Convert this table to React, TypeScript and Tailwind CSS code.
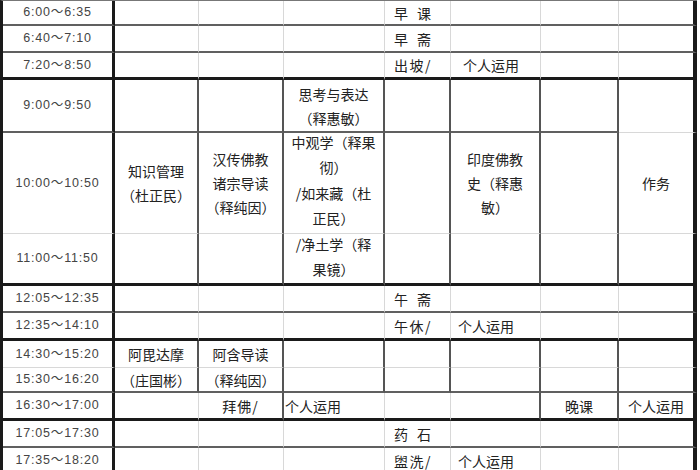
import React from "react";

// border styles per cell edge
const R = {
  thick: "border-r-[3px] border-r-[#1a1a1a]",
  dark: "border-r-2 border-r-[#555555]",
  light: "border-r border-r-[#d8d8d8]",
  edge: "border-r-4 border-r-[#1a1a1a]",
};
const B = {
  thick: "border-b-[3px] border-b-[#1a1a1a]",
  dark: "border-b-2 border-b-[#606060]",
  light: "border-b border-b-[#d8d8d8]",
};

type RK = keyof typeof R;
type BK = keyof typeof B;

type CellDef = { c: React.ReactNode; cls?: string };
type RowDef = {
  time: string;
  b: BK;
  b7?: BK;
  r: RK | RK[];
  cells?: Partial<Record<number, CellDef>>;
};

const CJK = "font-['Noto_Sans_CJK_SC',sans-serif] text-[14px] text-[#222] whitespace-nowrap";
const LEFT4 = "justify-start pl-[9px]";

function T({ children, className = "" }: { children: React.ReactNode; className?: string }) {
  return <span className={`${CJK} leading-[24px] ${className}`}>{children}</span>;
}

function Sp({ a, b }: { a: string; b: string }) {
  return (
    <span className={`${CJK} leading-[24px] flex`}>
      <span>{a}</span>
      <span className="ml-[9px]">{b}</span>
    </span>
  );
}

function Lines({ l, lead = "leading-[24px]" }: { l: string[]; lead?: string }) {
  return (
    <div className={`${CJK} ${lead} flex flex-col items-center text-center`}>
      {l.map((s) => (
        <span key={s}>{s}</span>
      ))}
    </div>
  );
}

const rows: RowDef[] = [
  { time: "6:00～6:35", b: "dark", r: "light", cells: { 4: { c: <Sp a="早" b="课" />, cls: LEFT4 } } },
  { time: "6:40～7:10", b: "dark", r: "light", cells: { 4: { c: <Sp a="早" b="斋" />, cls: LEFT4 } } },
  {
    time: "7:20～8:50",
    b: "thick",
    r: "light",
    cells: {
      4: { c: <T className="tracking-[1.5px]">出坡/</T>, cls: LEFT4 },
      5: { c: <T>个人运用</T>, cls: "justify-start pl-[12px]" },
    },
  },
  {
    time: "9:00～9:50",
    b: "dark",
    b7: "light",
    r: "dark",
    cells: { 3: { c: <Lines l={["思考与表达", "（释惠敏）"]} /> } },
  },
  {
    time: "10:00～10:50",
    b: "light",
    r: "dark",
    cells: {
      1: { c: <Lines l={["知识管理", "（杜正民）"]} /> },
      2: { c: <Lines l={["汉传佛教", "诸宗导读", "（释纯因）"]} /> },
      // text runs on into the 11:00 row, over the light grid line
      3: {
        c: (
          <div className="h-[146px] shrink-0 flex flex-col justify-center">
            <Lines
              lead="leading-[25.5px]"
              l={["中观学（释果", "彻）", "/如来藏（杜", "正民）", "/净土学（释", "果镜）"]}
            />
          </div>
        ),
        cls: "justify-center items-start overflow-visible",
      },
      5: { c: <Lines l={["印度佛教", "史（释惠", "敏）"]} /> },
      7: { c: <T>作务</T> },
    },
  },
  { time: "11:00～11:50", b: "thick", r: "dark" },
  { time: "12:05～12:35", b: "dark", r: "light", cells: { 4: { c: <Sp a="午" b="斋" />, cls: LEFT4 } } },
  {
    time: "12:35～14:10",
    b: "thick",
    r: "light",
    cells: {
      4: { c: <T className="tracking-[1.5px]">午休/</T>, cls: LEFT4 },
      5: { c: <T>个人运用</T>, cls: "justify-start pl-[7px]" },
    },
  },
  {
    time: "14:30～15:20",
    b: "light",
    r: "dark",
    cells: { 1: { c: <T>阿毘达摩</T> }, 2: { c: <T>阿含导读</T> } },
  },
  {
    time: "15:30～16:20",
    b: "dark",
    r: "dark",
    cells: { 1: { c: <T>（庄国彬）</T> }, 2: { c: <T>（释纯因）</T> } },
  },
  {
    time: "16:30～17:00",
    b: "thick",
    r: ["light", "dark", "light", "light", "dark", "dark"],
    cells: {
      2: { c: <T className="tracking-[1px]">拜佛/</T> },
      3: { c: <T>个人运用</T>, cls: "justify-start pl-[1px]" },
      6: { c: <T>晚课</T> },
      7: { c: <T>个人运用</T> },
    },
  },
  { time: "17:05～17:30", b: "dark", r: "light", cells: { 4: { c: <Sp a="药" b="石" />, cls: LEFT4 } } },
  {
    time: "17:35～18:20",
    b: "dark",
    r: "light",
    cells: {
      4: { c: <T className="tracking-[1.5px]">盥洗/</T>, cls: LEFT4 },
      5: { c: <T>个人运用</T>, cls: "justify-start pl-[7px]" },
    },
  },
];

const COLS = [1, 2, 3, 4, 5, 6, 7];

function Cell({ r, b, cls = "justify-center", children }: { r: RK; b: BK; cls?: string; children?: React.ReactNode }) {
  return <div className={`flex items-center min-w-0 min-h-0 ${R[r]} ${B[b]} ${cls}`}>{children}</div>;
}

export default function App() {
  return (
    <div className="w-[700px] h-[470px] overflow-hidden bg-white">
      <div className="grid w-fit grid-cols-[112px_84px_85px_101px_66px_90px_78px_78px] grid-rows-[25px_27px_27px_53px_101px_52px_27px_28px_27px_25px_28px_27px_27px] border-l-[3px] border-l-[#1a1a1a] border-t border-t-[#777]">
        {rows.map((row, i) => (
          <React.Fragment key={i}>
            <Cell r="thick" b={row.b}>
              <span className="font-['Liberation_Sans','Noto_Sans_CJK_SC',sans-serif] text-[12.5px] tracking-[0.8px] text-[#444] whitespace-nowrap">
                {row.time}
              </span>
            </Cell>
            {COLS.map((c) => {
              const r: RK = c === 7 ? "edge" : Array.isArray(row.r) ? row.r[c - 1] : row.r;
              const b: BK = c === 7 && row.b7 ? row.b7 : row.b;
              const def = row.cells?.[c];
              return (
                <Cell key={c} r={r} b={b} cls={def?.cls}>
                  {def?.c}
                </Cell>
              );
            })}
          </React.Fragment>
        ))}
      </div>
    </div>
  );
}
